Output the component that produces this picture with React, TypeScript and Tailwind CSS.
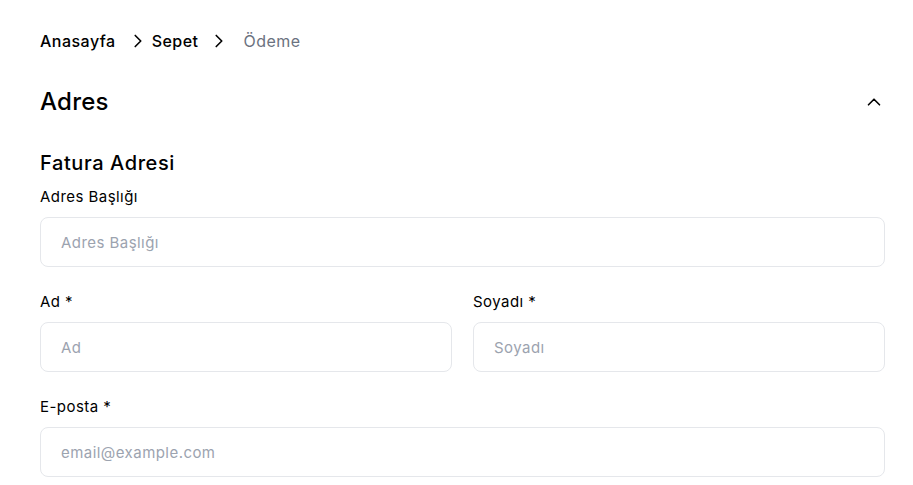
import React from 'react';
import { ChevronRight, ChevronUp } from 'lucide-react';

const Field: React.FC<{ label: string; placeholder: string; className?: string }> = ({ label, placeholder, className }) => (
  <div className={className}>
    <label className="block text-[15px] leading-5 tracking-[0.03em] text-black">{label}</label>
    <input
      placeholder={placeholder}
      className="mt-[10px] block h-[50px] w-full rounded-lg border border-[#e5e7eb] bg-white px-5 text-[15px] tracking-[0.03em] text-black placeholder:text-[#9ca3af] outline-none"
    />
  </div>
);

const App: React.FC = () => {
  return (
    <div className="min-h-[485px] bg-white pl-10 pr-7 pt-[30px] text-black" style={{ fontFamily: 'Inter, "Noto Sans", sans-serif' }}>
      <nav className="flex items-center text-[16px] leading-5 tracking-[0.03em] font-medium">
        <span>Anasayfa</span>
        <ChevronRight className="ml-[11px] mr-[3px] h-[22px] w-[22px]" strokeWidth={1.8} />
        <span>Sepet</span>
        <ChevronRight className="ml-[9px] mr-[14px] h-[22px] w-[22px]" strokeWidth={1.8} />
        <span className="font-normal text-[#6b7280]">Ödeme</span>
      </nav>

      <div className="mt-[34px] flex items-center justify-between">
        <h2 className="text-[24px] leading-8 tracking-[0.01em] font-medium">Adres</h2>
        <ChevronUp className="mr-0 h-[22px] w-[22px]" strokeWidth={1.8} />
      </div>

      <h3 className="mt-[31px] text-[20px] leading-7 tracking-[0.03em] font-medium">Fatura Adresi</h3>

      <div className="mt-[10px] flex flex-col gap-[25px]">
        <Field label="Adres Başlığı" placeholder="Adres Başlığı" />
        <div className="grid grid-cols-2 gap-[21px]">
          <Field label="Ad *" placeholder="Ad" />
          <Field label="Soyadı *" placeholder="Soyadı" />
        </div>
        <Field label="E-posta *" placeholder="email@example.com" />
      </div>
    </div>
  );
};

export default App;
